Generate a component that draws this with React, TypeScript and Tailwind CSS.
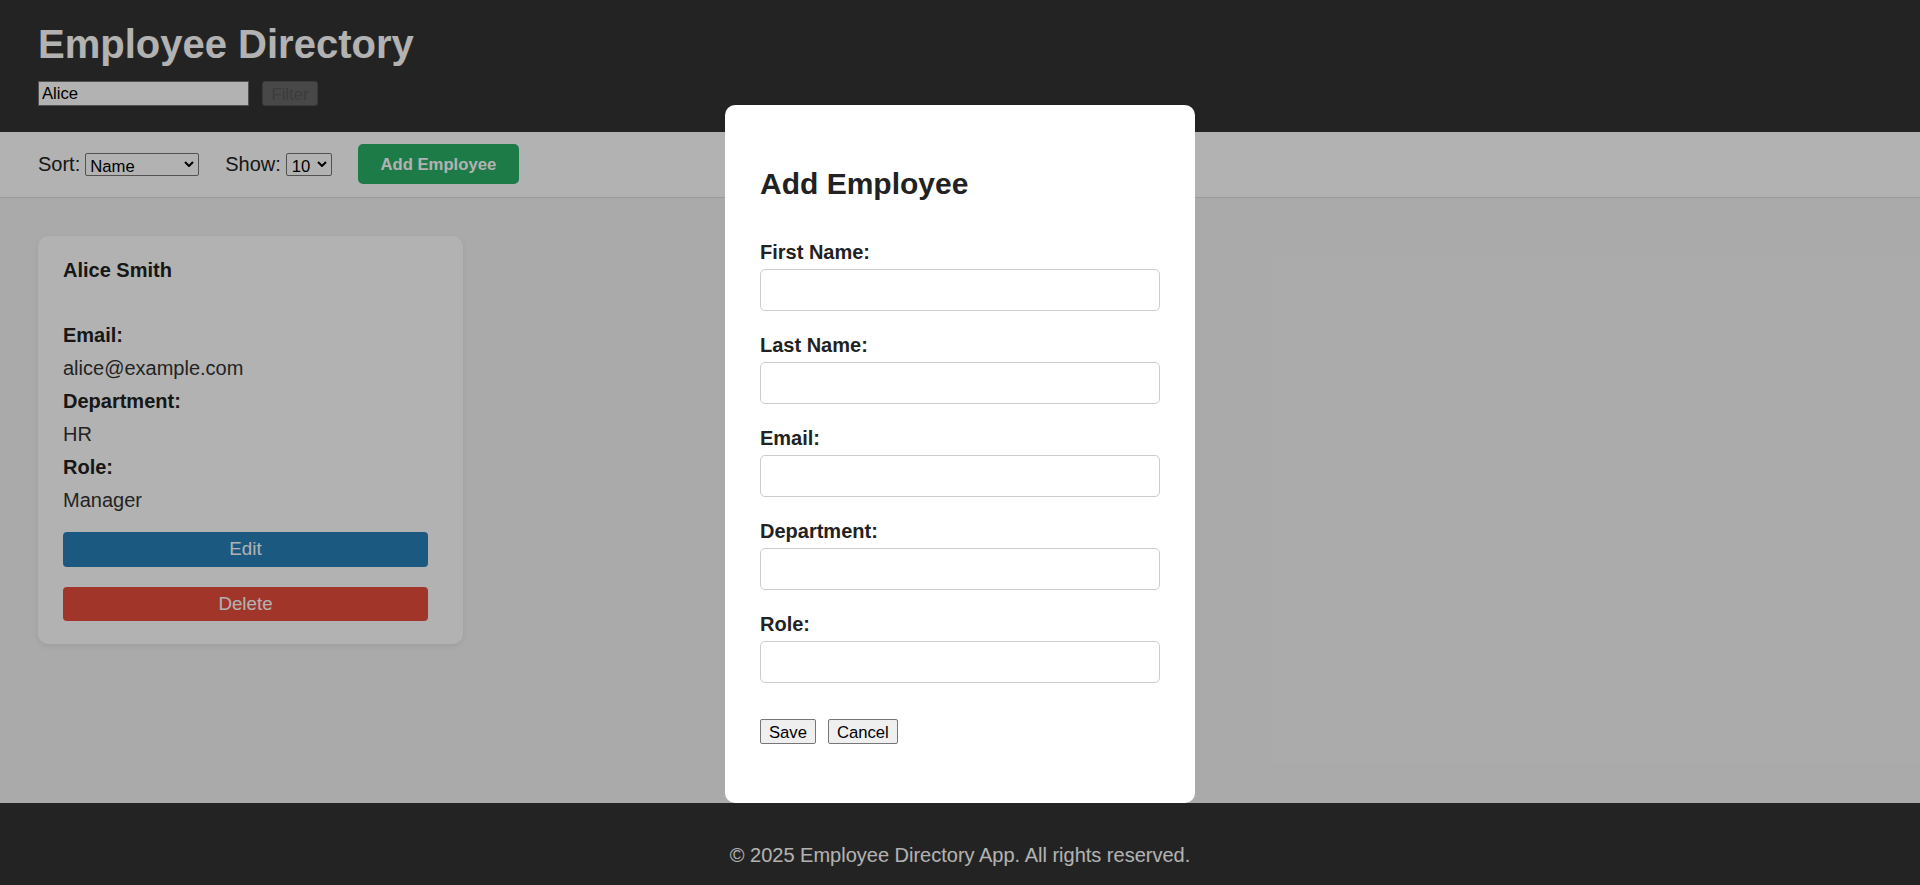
import { useState } from "react";

const employee = {
  name: "Alice Smith",
  rows: [
    { label: "Email:", value: "alice@example.com" },
    { label: "Department:", value: "HR" },
    { label: "Role:", value: "Manager" },
  ],
};

const fields = ["First Name:", "Last Name:", "Email:", "Department:", "Role:"];

function Chevron() {
  return (
    <svg
      className="pointer-events-none absolute right-[5px] top-1/2 -translate-y-1/2"
      width="10"
      height="6"
      viewBox="0 0 10 6"
      fill="none"
      stroke="#000"
      strokeWidth="2"
    >
      <path d="M1 1l4 4 4-4" />
    </svg>
  );
}

export default function App() {
  const [filter, setFilter] = useState("Alice");

  return (
    <div className="relative font-['Liberation_Sans',Arial,sans-serif] text-[20px] text-[#222]">
      <header className="bg-[#333] px-[38px] pt-[21px] pb-[26px]">
        <h1 className="text-[40px] font-bold leading-[46px] text-white">Employee Directory</h1>
        <div className="mt-[14px] flex items-center gap-[13px]">
          <input
            value={filter}
            onChange={(e) => setFilter(e.target.value)}
            className="h-[25px] w-[211px] border border-[#767676] bg-white px-[3px] text-[16.67px] text-black"
          />
          <button
            type="button"
            disabled
            className="h-[25px] w-[56px] rounded-[3px] border border-[#535353] bg-[#676767] text-[16.67px] text-[#565656]"
          >
            Filter
          </button>
        </div>
      </header>

      <div className="flex h-[66px] items-center border-b border-[#dddddd] bg-white px-[38px] pb-px">
        <span>Sort:</span>
        <div className="relative ml-[5px]">
          <select className="block h-[23px] w-[114px] appearance-none rounded-[2px] border border-[#767676] bg-white pl-[4px] text-[16.67px] text-black">
            <option>Name</option>
            <option>Department</option>
          </select>
          <Chevron />
        </div>
        <span className="ml-[26px]">Show:</span>
        <div className="relative ml-[5px]">
          <select className="block h-[23px] w-[46px] appearance-none rounded-[2px] border border-[#767676] bg-white pl-[5px] text-[16.67px] text-black">
            <option>10</option>
            <option>20</option>
          </select>
          <Chevron />
        </div>
        <button
          type="button"
          className="ml-[26px] h-[40px] w-[161px] rounded-[5px] bg-[#2ab068] text-[16.67px] font-bold text-white"
        >
          Add Employee
        </button>
      </div>

      <main className="h-[605px] bg-[#f4f4f4] px-[38px] pt-[38px]">
        <div className="w-[425px] rounded-[10px] bg-white px-[25px] pt-[23px] pb-[23px] shadow-[0_2px_6px_rgba(0,0,0,0.08)]">
          <h3 className="mb-[37px] font-bold leading-[23px] text-[#222]">{employee.name}</h3>
          {employee.rows.map((row) => (
            <div key={row.label}>
              <p className="font-bold leading-[33px] text-[#222]">{row.label}</p>
              <p className="leading-[33px] text-[#333]">{row.value}</p>
            </div>
          ))}
          <button type="button" className="mt-[15px] block h-[35px] w-[365px] rounded-[4px] bg-[#2980b9] text-[18.75px] text-white">
            Edit
          </button>
          <button type="button" className="mt-[20px] block h-[34px] w-[365px] rounded-[4px] bg-[#e74c3c] text-[18.75px] text-white">
            Delete
          </button>
        </div>
      </main>

      <footer className="bg-[#333] py-[41px] text-center leading-[23px] text-white">
        © 2025 Employee Directory App. All rights reserved.
      </footer>

      <div className="absolute inset-0 flex items-center justify-center bg-black/30">
        <div className="w-[470px] rounded-[10px] bg-white px-[35px] pt-[61px] pb-[59px]">
          <h2 className="mb-[37px] text-[30px] font-bold leading-[35px] text-[#222]">Add Employee</h2>
          {fields.map((f) => (
            <div key={f} className="mb-[20px]">
              <label className="mb-[2px] block font-bold leading-[29px] text-[#222]">{f}</label>
              <input className="block h-[42px] w-full rounded-[5px] border border-[#cccccc] px-[10px] text-[16.67px]" />
            </div>
          ))}
          <div className="mt-[36px] flex gap-[12px]">
            <button
              type="button"
              className="h-[25px] rounded-[2px] border border-[#767676] bg-[#efefef] px-[8px] text-[16.67px] text-black"
            >
              Save
            </button>
            <button
              type="button"
              className="h-[25px] rounded-[2px] border border-[#767676] bg-[#efefef] px-[8px] text-[16.67px] text-black"
            >
              Cancel
            </button>
          </div>
        </div>
      </div>
    </div>
  );
}
